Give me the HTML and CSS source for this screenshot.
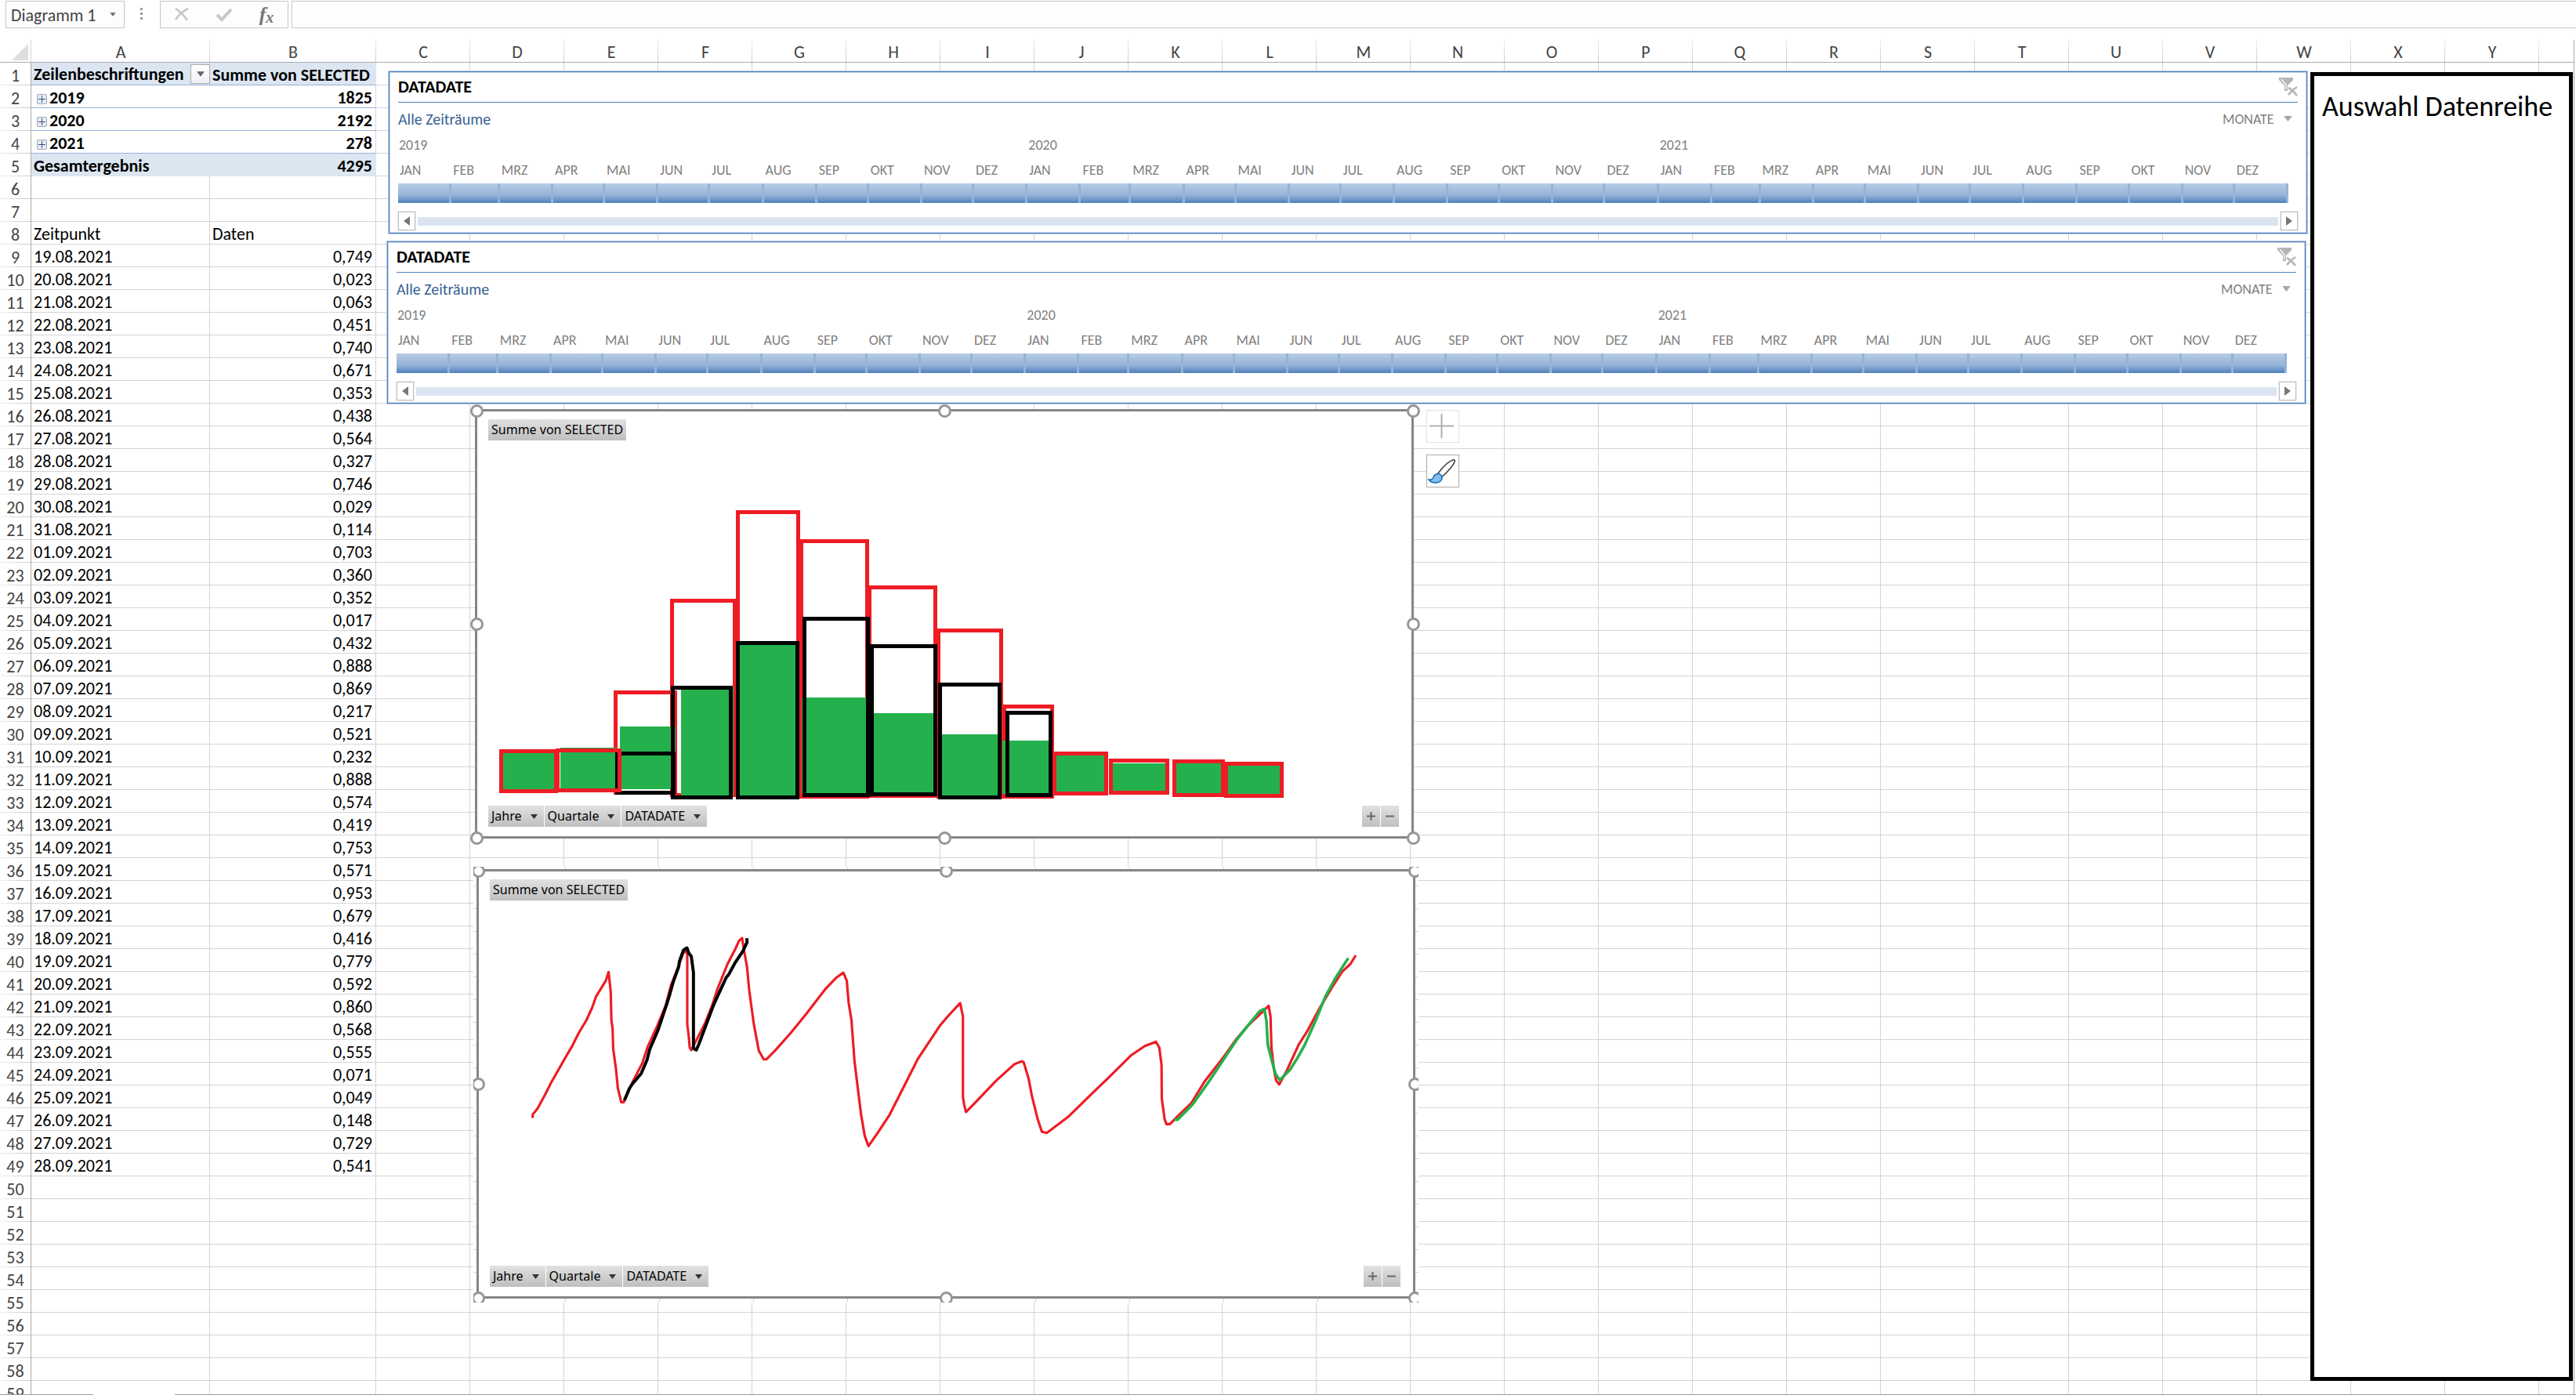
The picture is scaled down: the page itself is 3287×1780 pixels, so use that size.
FILE: index.html
```html
<!DOCTYPE html>
<html lang="de">
<head>
<meta charset="utf-8">
<title>Diagramm 1</title>
<link rel="stylesheet" href="styles.css">
</head>
<body>
<svg class="defs" aria-hidden="true">
  <symbol id="down" viewBox="0 0 12 8"><path d="M0 0h12L6 8z"/></symbol>
  <symbol id="left" viewBox="0 0 8 12"><path d="M8 0v12L0 6z"/></symbol>
  <symbol id="right" viewBox="0 0 8 12"><path d="M0 0v12l8-6z"/></symbol>
  <symbol id="clear-filter" viewBox="0 0 24 24"><path d="M0 0h18v3l-7 7v7H7v-7L0 3z" fill="#b5b5b5"/><path d="M3 2l6 7v6" fill="none" stroke="#fff" stroke-width="1.3"/><path d="M12 13c4 2 7 5 11 10M23 12c-5 3-8 6-11 10" fill="none" stroke="#b5b5b5" stroke-width="2.6"/></symbol>
</svg>

<header class="formula-bar">
  <div class="name-box">
    <input class="name-input" type="text" value="Diagramm 1" aria-label="Namenfeld">
    <button class="name-toggle" type="button" aria-label="Namen anzeigen"><svg width="8" height="5"><use href="#down"/></svg></button>
  </div>
  <span class="grip"></span>
  <div class="tools">
    <button type="button" aria-label="Abbrechen"><svg width="18" height="17" viewBox="0 0 18 17"><path d="M1 1c6 4 11 9 15 15M17 1C11 4 5 9 1 15" fill="none" stroke="#c3c3c3" stroke-width="2.4"/></svg></button>
    <button type="button" aria-label="Eingeben"><svg width="20" height="18" viewBox="0 0 20 18"><path d="M1 9l6 6L19 2" fill="none" stroke="#c8c8c8" stroke-width="4"/></svg></button>
    <button class="fx" type="button" aria-label="Funktion einfügen">f<span>x</span></button>
  </div>
  <input class="formula" type="text" aria-label="Bearbeitungsleiste">
</header>

<main class="sheet">
<table class="grid">
<colgroup><col class="c-num"><col class="c-a"><col class="c-b"><col class="c-std" span="23"><col></colgroup>
<thead>
<tr><th class="corner"><svg width="21" height="21" viewBox="0 0 21 21"><path d="M21 0v21H0z" fill="#dedede"/></svg></th><th>A</th><th>B</th><th>C</th><th>D</th><th>E</th><th>F</th><th>G</th><th>H</th><th>I</th><th>J</th><th>K</th><th>L</th><th>M</th><th>N</th><th>O</th><th>P</th><th>Q</th><th>R</th><th>S</th><th>T</th><th>U</th><th>V</th><th>W</th><th>X</th><th>Y</th><th class="last"></th></tr>
</thead>
<tbody>
<tr class="pivot total"><th>1</th><td class="has-field"><div class="field">Zeilenbeschriftungen<button type="button" aria-label="Filter"><svg width="10" height="7"><use href="#down"/></svg></button></div></td><td class="label">Summe von SELECTED</td><td class="rest" colspan="24"></td></tr>
<tr class="pivot"><th>2</th><td><button class="expand" type="button" aria-label="Erweitern"></button>2019</td><td>1825</td><td class="rest" colspan="24"></td></tr>
<tr class="pivot"><th>3</th><td><button class="expand" type="button" aria-label="Erweitern"></button>2020</td><td>2192</td><td class="rest" colspan="24"></td></tr>
<tr class="pivot"><th>4</th><td><button class="expand" type="button" aria-label="Erweitern"></button>2021</td><td>278</td><td class="rest" colspan="24"></td></tr>
<tr class="pivot total sum"><th>5</th><td>Gesamtergebnis</td><td>4295</td><td class="rest" colspan="24"></td></tr>
<tr><th>6</th><td></td><td></td><td class="rest" colspan="24"></td></tr>
<tr><th>7</th><td></td><td></td><td class="rest" colspan="24"></td></tr>
<tr><th>8</th><td>Zeitpunkt</td><td class="label">Daten</td><td class="rest" colspan="24"></td></tr>
<tr><th>9</th><td>19.08.2021</td><td>0,749</td><td class="rest" colspan="24"></td></tr>
<tr><th>10</th><td>20.08.2021</td><td>0,023</td><td class="rest" colspan="24"></td></tr>
<tr><th>11</th><td>21.08.2021</td><td>0,063</td><td class="rest" colspan="24"></td></tr>
<tr><th>12</th><td>22.08.2021</td><td>0,451</td><td class="rest" colspan="24"></td></tr>
<tr><th>13</th><td>23.08.2021</td><td>0,740</td><td class="rest" colspan="24"></td></tr>
<tr><th>14</th><td>24.08.2021</td><td>0,671</td><td class="rest" colspan="24"></td></tr>
<tr><th>15</th><td>25.08.2021</td><td>0,353</td><td class="rest" colspan="24"></td></tr>
<tr><th>16</th><td>26.08.2021</td><td>0,438</td><td class="rest" colspan="24"></td></tr>
<tr><th>17</th><td>27.08.2021</td><td>0,564</td><td class="rest" colspan="24"></td></tr>
<tr><th>18</th><td>28.08.2021</td><td>0,327</td><td class="rest" colspan="24"></td></tr>
<tr><th>19</th><td>29.08.2021</td><td>0,746</td><td class="rest" colspan="24"></td></tr>
<tr><th>20</th><td>30.08.2021</td><td>0,029</td><td class="rest" colspan="24"></td></tr>
<tr><th>21</th><td>31.08.2021</td><td>0,114</td><td class="rest" colspan="24"></td></tr>
<tr><th>22</th><td>01.09.2021</td><td>0,703</td><td class="rest" colspan="24"></td></tr>
<tr><th>23</th><td>02.09.2021</td><td>0,360</td><td class="rest" colspan="24"></td></tr>
<tr><th>24</th><td>03.09.2021</td><td>0,352</td><td class="rest" colspan="24"></td></tr>
<tr><th>25</th><td>04.09.2021</td><td>0,017</td><td class="rest" colspan="24"></td></tr>
<tr><th>26</th><td>05.09.2021</td><td>0,432</td><td class="rest" colspan="24"></td></tr>
<tr><th>27</th><td>06.09.2021</td><td>0,888</td><td class="rest" colspan="24"></td></tr>
<tr><th>28</th><td>07.09.2021</td><td>0,869</td><td class="rest" colspan="24"></td></tr>
<tr><th>29</th><td>08.09.2021</td><td>0,217</td><td class="rest" colspan="24"></td></tr>
<tr><th>30</th><td>09.09.2021</td><td>0,521</td><td class="rest" colspan="24"></td></tr>
<tr><th>31</th><td>10.09.2021</td><td>0,232</td><td class="rest" colspan="24"></td></tr>
<tr><th>32</th><td>11.09.2021</td><td>0,888</td><td class="rest" colspan="24"></td></tr>
<tr><th>33</th><td>12.09.2021</td><td>0,574</td><td class="rest" colspan="24"></td></tr>
<tr><th>34</th><td>13.09.2021</td><td>0,419</td><td class="rest" colspan="24"></td></tr>
<tr><th>35</th><td>14.09.2021</td><td>0,753</td><td class="rest" colspan="24"></td></tr>
<tr><th>36</th><td>15.09.2021</td><td>0,571</td><td class="rest" colspan="24"></td></tr>
<tr><th>37</th><td>16.09.2021</td><td>0,953</td><td class="rest" colspan="24"></td></tr>
<tr><th>38</th><td>17.09.2021</td><td>0,679</td><td class="rest" colspan="24"></td></tr>
<tr><th>39</th><td>18.09.2021</td><td>0,416</td><td class="rest" colspan="24"></td></tr>
<tr><th>40</th><td>19.09.2021</td><td>0,779</td><td class="rest" colspan="24"></td></tr>
<tr><th>41</th><td>20.09.2021</td><td>0,592</td><td class="rest" colspan="24"></td></tr>
<tr><th>42</th><td>21.09.2021</td><td>0,860</td><td class="rest" colspan="24"></td></tr>
<tr><th>43</th><td>22.09.2021</td><td>0,568</td><td class="rest" colspan="24"></td></tr>
<tr><th>44</th><td>23.09.2021</td><td>0,555</td><td class="rest" colspan="24"></td></tr>
<tr><th>45</th><td>24.09.2021</td><td>0,071</td><td class="rest" colspan="24"></td></tr>
<tr><th>46</th><td>25.09.2021</td><td>0,049</td><td class="rest" colspan="24"></td></tr>
<tr><th>47</th><td>26.09.2021</td><td>0,148</td><td class="rest" colspan="24"></td></tr>
<tr><th>48</th><td>27.09.2021</td><td>0,729</td><td class="rest" colspan="24"></td></tr>
<tr><th>49</th><td>28.09.2021</td><td>0,541</td><td class="rest" colspan="24"></td></tr>
<tr><th>50</th><td></td><td></td><td class="rest" colspan="24"></td></tr>
<tr><th>51</th><td></td><td></td><td class="rest" colspan="24"></td></tr>
<tr><th>52</th><td></td><td></td><td class="rest" colspan="24"></td></tr>
<tr><th>53</th><td></td><td></td><td class="rest" colspan="24"></td></tr>
<tr><th>54</th><td></td><td></td><td class="rest" colspan="24"></td></tr>
<tr><th>55</th><td></td><td></td><td class="rest" colspan="24"></td></tr>
<tr><th>56</th><td></td><td></td><td class="rest" colspan="24"></td></tr>
<tr><th>57</th><td></td><td></td><td class="rest" colspan="24"></td></tr>
<tr><th>58</th><td></td><td></td><td class="rest" colspan="24"></td></tr>
<tr><th>59</th><td></td><td></td><td class="rest" colspan="24"></td></tr>
</tbody>
</table>

<section class="slicer slicer-1">
  <div class="slicer-head"><h2>DATADATE</h2><button type="button" aria-label="Filter löschen"><svg width="24" height="24"><use href="#clear-filter"/></svg></button></div>
  <div class="slicer-period"><span>Alle Zeiträume</span><label class="level"><select aria-label="Zeitebene"><option>MONATE</option></select><svg width="11" height="7"><use href="#down"/></svg></label></div>
  <div class="years">
    <div class="year"><h3>2019</h3><ol><li class="d31">JAN</li><li class="d28">FEB</li><li class="d31">MRZ</li><li class="d30">APR</li><li class="d31">MAI</li><li class="d30">JUN</li><li class="d31">JUL</li><li class="d31">AUG</li><li class="d30">SEP</li><li class="d31">OKT</li><li class="d30">NOV</li><li class="d31">DEZ</li></ol></div>
    <div class="year leap"><h3>2020</h3><ol><li class="d31">JAN</li><li class="d29">FEB</li><li class="d31">MRZ</li><li class="d30">APR</li><li class="d31">MAI</li><li class="d30">JUN</li><li class="d31">JUL</li><li class="d31">AUG</li><li class="d30">SEP</li><li class="d31">OKT</li><li class="d30">NOV</li><li class="d31">DEZ</li></ol></div>
    <div class="year"><h3>2021</h3><ol><li class="d31">JAN</li><li class="d28">FEB</li><li class="d31">MRZ</li><li class="d30">APR</li><li class="d31">MAI</li><li class="d30">JUN</li><li class="d31">JUL</li><li class="d31">AUG</li><li class="d30">SEP</li><li class="d31">OKT</li><li class="d30">NOV</li><li class="d31">DEZ</li></ol></div>
  </div>
  <div class="scroll"><button type="button" aria-label="Zurück"><svg width="8" height="12"><use href="#left"/></svg></button><span class="track"></span><button type="button" aria-label="Weiter"><svg width="8" height="12"><use href="#right"/></svg></button></div>
</section>

<section class="slicer slicer-2">
  <div class="slicer-head"><h2>DATADATE</h2><button type="button" aria-label="Filter löschen"><svg width="24" height="24"><use href="#clear-filter"/></svg></button></div>
  <div class="slicer-period"><span>Alle Zeiträume</span><label class="level"><select aria-label="Zeitebene"><option>MONATE</option></select><svg width="11" height="7"><use href="#down"/></svg></label></div>
  <div class="years">
    <div class="year"><h3>2019</h3><ol><li class="d31">JAN</li><li class="d28">FEB</li><li class="d31">MRZ</li><li class="d30">APR</li><li class="d31">MAI</li><li class="d30">JUN</li><li class="d31">JUL</li><li class="d31">AUG</li><li class="d30">SEP</li><li class="d31">OKT</li><li class="d30">NOV</li><li class="d31">DEZ</li></ol></div>
    <div class="year leap"><h3>2020</h3><ol><li class="d31">JAN</li><li class="d29">FEB</li><li class="d31">MRZ</li><li class="d30">APR</li><li class="d31">MAI</li><li class="d30">JUN</li><li class="d31">JUL</li><li class="d31">AUG</li><li class="d30">SEP</li><li class="d31">OKT</li><li class="d30">NOV</li><li class="d31">DEZ</li></ol></div>
    <div class="year"><h3>2021</h3><ol><li class="d31">JAN</li><li class="d28">FEB</li><li class="d31">MRZ</li><li class="d30">APR</li><li class="d31">MAI</li><li class="d30">JUN</li><li class="d31">JUL</li><li class="d31">AUG</li><li class="d30">SEP</li><li class="d31">OKT</li><li class="d30">NOV</li><li class="d31">DEZ</li></ol></div>
  </div>
  <div class="scroll"><button type="button" aria-label="Zurück"><svg width="8" height="12"><use href="#left"/></svg></button><span class="track"></span><button type="button" aria-label="Weiter"><svg width="8" height="12"><use href="#right"/></svg></button></div>
</section>

<div class="holder holder-1">
<section class="chart">
  <div class="chart-row"><button class="chip value" type="button">Summe von SELECTED</button></div>
  <svg class="plot" viewBox="623 562 1162 466" role="img" aria-label="Histogramm">
    <g fill="none" stroke="#ee1c24" stroke-width="5">
      <path d="M785.5 883.5h76v128h-76zM857.5 766.5h80v248h-80zM941.5 653.5h77v361h-77zM1022.5 690.5h84v326h-84zM1109.5 749.5h84v266h-84zM1197.5 804.5h80v212h-80zM1281.5 901.5h61v115h-61z"/>
    </g>
    <path fill="#24b14d" d="M641 961h66v46h-66zM715 954h72v52h-72zM791 927h71v80h-71zM869 876h67v139h-67zM944 823h71v192h-71zM1023 890h82v123h-82zM1112 910h79v101h-79zM1202 937h71v78h-71zM1279 945h60v68h-60zM1348 963h61v47h-61zM1420 974h67v35h-67zM1501 974h57v38h-57zM1567 977h66v36h-66z"/>
    <path fill="none" stroke="#000" stroke-width="5" d="M787.5 961.5h72v50h-72zM858.5 877.5h74v140h-74zM941.5 820.5h76v197h-76zM1026.5 789.5h81v225h-81zM1112.5 824.5h81v189h-81zM1199.5 873.5h76v144h-76zM1285.5 909.5h55v105h-55z"/>
    <path fill="none" stroke="#ee1c24" stroke-width="5" d="M639.5 958.5h70v51h-70zM711.5 957.5h79v51h-79zM1345.5 961.5h66v51h-66zM1417.5 970.5h72v41h-72zM1498.5 971.5h62v43h-62zM1564.5 974.5h71v41h-71z"/>
  </svg>
  <div class="chart-row"><div class="chips"><button class="chip" type="button">Jahre<svg width="9" height="6"><use href="#down"/></svg></button><button class="chip" type="button">Quartale<svg width="9" height="6"><use href="#down"/></svg></button><button class="chip" type="button">DATADATE<svg width="9" height="6"><use href="#down"/></svg></button></div><div class="chips"><button class="chip zoom" type="button" aria-label="Feld erweitern"><svg width="11" height="11" viewBox="0 0 11 11"><path d="M0 5.5h11M5.5 0v11" stroke="#6a6a6a" stroke-width="2"/></svg></button><button class="chip zoom" type="button" aria-label="Feld reduzieren"><svg width="11" height="11" viewBox="0 0 11 11"><path d="M0 5.5h11" stroke="#6a6a6a" stroke-width="2"/></svg></button></div></div>
  <i class="knob t l"></i><i class="knob t c"></i><i class="knob t r"></i><i class="knob m l"></i><i class="knob m r"></i><i class="knob b l"></i><i class="knob b c"></i><i class="knob b r"></i>
</section>
</div>

<div class="holder holder-2">
<section class="chart">
  <div class="chart-row"><button class="chip value" type="button">Summe von SELECTED</button></div>
  <svg class="plot" viewBox="88 225 2939 1179" role="img" aria-label="Liniendiagramm">
    <g fill="none" stroke-linejoin="round">
    <polyline stroke="#ee1c24" stroke-width="8" points="226,927 226,916 242,896 266,852 284,816 330,735 354,694 374,654 399,612 418,571 430,536 462,484 471,456 478,520 480,610 484,640 486,705 495,770 501,832 512,876 520,876 548,812 580,750 597,698 628,630 655,565 672,500 690,455 712,395 720,385 725,400 725,625 730,665 733,700 738,708 755,675 782,622 805,565 822,512 855,430 880,382 892,355 902,346 908,385 918,440 925,515 940,625 956,710 972,738 980,738 1010,708 1058,654 1110,590 1170,512 1205,475 1229,458 1240,484 1246,555 1255,610 1265,745 1286,915 1298,985 1310,1018 1340,975 1378,917 1440,795 1469,737 1540,630 1568,597 1606,556 1615,600 1615,860 1619,885 1625,908 1656,876 1721,808 1782,753 1805,744 1811,747 1827,800 1838,858 1856,930 1870,972 1886,975 1954,924 2040,840 2085,797 2159,724 2202,695 2238,681 2249,700 2256,755 2257,865 2266,930 2272,947 2283,947 2310,920 2353,878 2396,808 2453,735 2498,672 2534,630 2576,590 2602,565 2608,600 2611,700 2619,770 2626,806 2636,819 2660,775 2699,690 2726,648 2768,570 2807,505 2839,455 2866,430 2883,402"/>
    <polyline stroke="#000" stroke-width="10" points="522,870 538,832 548,817 576,784 595,740 604,705 630,645 658,562 668,530 680,487 697,440 700,420 713,385 724,378 730,395 738,405 745,458 745,702 754,708 762,690 780,642 810,562 850,475 860,462 880,425 905,388 918,360 917,347"/>
    <polyline stroke="#24b14d" stroke-width="9" points="2297,933 2308,933 2356,884 2410,808 2450,748 2498,676 2534,630 2572,583 2588,575 2595,615 2599,690 2613,745 2624,785 2638,805 2672,770 2694,735 2719,690 2757,605 2785,535 2816,478 2835,448 2859,411"/>
    </g>
  </svg>
  <div class="chart-row"><div class="chips"><button class="chip" type="button">Jahre<svg width="9" height="6"><use href="#down"/></svg></button><button class="chip" type="button">Quartale<svg width="9" height="6"><use href="#down"/></svg></button><button class="chip" type="button">DATADATE<svg width="9" height="6"><use href="#down"/></svg></button></div><div class="chips"><button class="chip zoom" type="button" aria-label="Feld erweitern"><svg width="11" height="11" viewBox="0 0 11 11"><path d="M0 5.5h11M5.5 0v11" stroke="#6a6a6a" stroke-width="2"/></svg></button><button class="chip zoom" type="button" aria-label="Feld reduzieren"><svg width="11" height="11" viewBox="0 0 11 11"><path d="M0 5.5h11" stroke="#6a6a6a" stroke-width="2"/></svg></button></div></div>
  <i class="knob t l"></i><i class="knob t c"></i><i class="knob t r"></i><i class="knob m l"></i><i class="knob m r"></i><i class="knob b l"></i><i class="knob b c"></i><i class="knob b r"></i>
</section>
</div>

<div class="chart-tools">
  <button class="faded" type="button" aria-label="Diagrammelemente"><svg width="40" height="40" viewBox="0 0 40 40"><path d="M3 19.5h31M18.500 4v31" stroke="#b0b0b0" stroke-width="2"/></svg></button>
  <button type="button" aria-label="Diagrammformatvorlagen"><svg width="40" height="40" viewBox="0 0 40 40"><path d="M14 23C20 15 28 7 34 5.500c1.500.5 1.500 1.500 1 3C33 14 26 21 18.500 28z" fill="#fff" stroke="#444" stroke-width="1.700"/><path d="M2 31c4 .5 5-1 6.500-4 2-4 7-4.500 9.500-1.500 2.500 3.500 0 8-4 9-4 1-9 .5-12-3.500z" fill="#83beec" stroke="#1a73bd" stroke-width="1.600"/></svg></button>
</div>

<aside class="series-panel"><h1>Auswahl Datenreihe</h1></aside>
</main>
<footer class="tabs"><span class="tab-edge"></span><span class="tab-fill"></span></footer>
</body>
</html>
```
FILE: styles.css
```css
* { box-sizing: border-box; }

body {
  margin: 0;
  height: 100vh;
  display: flex;
  flex-direction: column;
  overflow: hidden;
  background: #fff;
  color: #000;
  font: 22px/28px Carlito, Calibri, Lato, sans-serif;
}

button, input, select {
  margin: 0;
  padding: 0;
  border: 0;
  border-radius: 0;
  background: none;
  color: inherit;
  font: inherit;
}

h1, h2, h3, ol { margin: 0; padding: 0; list-style: none; }
svg { display: block; }
.defs { display: none; }

/* Formula bar */
.formula-bar {
  display: flex;
  flex: none;
  height: 51px;
  padding: 1px 0 15px 7px;
}
.name-box, .tools, .formula { border: 1px solid #c6c6c6; background: #fdfdfd; color: #444; }
.name-box { display: flex; width: 152px; }
.name-input { width: 126px; padding: 2px 0 0 6px; }
.name-toggle { display: flex; flex: 1; align-items: center; justify-content: center; padding-right: 4px; fill: #777; }
.grip {
  width: 3px;
  height: 16px;
  margin: 9px 22px 0 20px;
  background: repeating-linear-gradient(#9b9b9b 0 3px, transparent 3px 6px);
}
.tools { display: flex; width: 164px; }
.tools button { display: flex; flex: 1; align-items: center; justify-content: center; }
.tools .fx { font: italic bold 26px/26px "Liberation Serif", serif; color: #777; }
.fx span { font-size: 20px; padding-top: 6px; }
.formula { flex: 1; margin-left: 4px; border-right: 0; padding: 0 8px; }

/* Cell grid */
.sheet {
  position: relative;
  flex: 1;
  min-height: 0;
  margin-right: 2px;
  overflow: hidden;
  border-right: 1px solid #ababab;
}
.grid { width: 100%; table-layout: fixed; border-collapse: separate; border-spacing: 0; }
.c-num { width: 40px; }
.c-a { width: 228px; }
.c-b { width: 212px; }
.c-std { width: 120px; }
.grid th, .grid td {
  height: 29px;
  padding: 3px 4px 0 3px;
  line-height: 25px;
  overflow: hidden;
  white-space: nowrap;
}
.grid th { font-weight: normal; color: #444; text-align: center; padding: 3px 0 0; }
thead th {
  border-bottom: 1px solid #ababab;
  background: linear-gradient(#f0f0f0, #c8c8c8) right / 1px 100% no-repeat;
}
.grid .corner { background: none; border-right: 1px solid #d4d4d4; }
.corner svg { margin-left: 15px; }
thead .last { background: none; }
tbody th {
  border-right: 1px solid #ababab;
  background: linear-gradient(90deg, #f0f0f0, #c8c8c8) bottom / 100% 1px no-repeat;
}
td { border-right: 1px solid #d4d4d4; border-bottom: 1px solid #d4d4d4; }
td:nth-child(3) { text-align: right; }
td.label { text-align: left; }
td.rest {
  border-right: 0;
  background: repeating-linear-gradient(90deg, transparent 0 119px, #d4d4d4 119px 120px);
}
.pivot td:not(.rest) { font-weight: bold; border-bottom-color: #95b3d7; }
.pivot td:nth-child(2) { border-right: 0; }
.total td:not(.rest) { background: #dce6f1; border-right-color: #dce6f1; }
.sum td:not(.rest) { border-bottom-color: #dce6f1; }
.grid .has-field { padding: 0 0 0 3px; }
.field { display: flex; justify-content: space-between; align-items: center; height: 28px; line-height: 31px; }
.field button {
  display: flex;
  width: 25px;
  height: 25px;
  align-items: center;
  justify-content: center;
  border: 1px solid #ababab;
  background: linear-gradient(#fff, #eef0f4);
  fill: #666;
}
.expand {
  width: 13px;
  height: 13px;
  margin: 0 3px 0 4px;
  border: 1px solid #9ba7b7;
  border-radius: 2px;
  background:
    linear-gradient(#3b4f81, #3b4f81) center / 9px 1px no-repeat,
    linear-gradient(#3b4f81, #3b4f81) center / 1px 9px no-repeat,
    #e6ebf3;
}

/* Timeline slicers */
.slicer {
  position: absolute;
  width: 2448px;
  height: 207px;
  padding: 0 11px;
  border: 1px solid #4f81bd;
  background: #fff;
  box-shadow: 0 0 0 1px #b8cce4, inset 0 0 0 1px #c9d8eb;
  color: #7f7f7f;
  font-size: 17px;
}
.slicer-1 { left: 496px; top: 40px; }
.slicer-2 { left: 494px; top: 257px; }
.slicer-head { display: flex; justify-content: space-between; align-items: center; height: 39px; border-bottom: 1px solid #4f81bd; }
.slicer h2 { font-size: 22px; line-height: 38px; color: #000; }
.slicer-period { display: flex; justify-content: space-between; align-items: center; height: 41px; color: #376092; font-size: 20px; }
.level { display: flex; align-items: center; width: 96px; padding-right: 7px; color: #7f7f7f; fill: #a6a6a6; font-size: 18px; }
.level select { appearance: none; flex: 1; width: 72px; }
.years { display: flex; margin-right: 12px; }
.year { flex: 365 1 0; min-width: 0; }
.leap { flex-grow: 366; }
.slicer h3 { padding-left: 1px; font-weight: normal; font-size: 18px; line-height: 26px; }
.year ol { display: flex; }
.year li { min-width: 0; padding-top: 2px; line-height: 34px; text-indent: 2px; font-size: 18px; }
.year li::after {
  content: "";
  display: block;
  height: 25px;
  border-right: 3px solid #95b3d7;
  background: linear-gradient(#b8cce4, #95b3d7 60%, #4f81bd);
}
.d28 { flex: 28 1 0; }
.d29 { flex: 29 1 0; }
.d30 { flex: 30 1 0; }
.d31 { flex: 31 1 0; }
.scroll { display: flex; align-items: center; gap: 3px; margin-top: 11px; }
.scroll button {
  display: flex;
  width: 22px;
  height: 24px;
  align-items: center;
  justify-content: center;
  border: 1px solid #bfbfbf;
  box-shadow: 0 0 0 1px #ececec;
  fill: #777;
}
.track { flex: 1; height: 11px; background: #dbe5f1; }

/* Floating charts */
.holder { position: absolute; width: 1206px; height: 556px; }
.holder-1 { left: 602px; top: 468px; }
.holder-2 {
  left: 604px;
  top: 1055px;
  overflow: hidden;
  background:
    repeating-linear-gradient(90deg, transparent 0 119px, #d4d4d4 119px 120px) -2px 0,
    repeating-linear-gradient(transparent 0 28px, #d4d4d4 28px 29px) 0 -4px,
    #fff;
}
.chart {
  position: relative;
  display: flex;
  flex-direction: column;
  height: 548px;
  margin: 3px 4px 5px;
  padding: 10px 16px 12px 14px;
  border: 3px solid #868686;
  background: #fff;
  font: 16px/27px "Noto Sans", sans-serif;
}
.holder-1 .chart, .holder-2 .chart { top: 0; }
.chart-row, .chips { display: flex; justify-content: space-between; gap: 1px; }
.chip {
  display: flex;
  align-items: center;
  gap: 11px;
  height: 27px;
  padding: 0 8px 0 4px;
  background: linear-gradient(#e1e1e1, #bfbfbf);
  fill: #333;
}
.value { padding-right: 4px; }
.zoom { width: 23px; justify-content: center; padding: 0; }
.plot { flex: 1; min-height: 0; width: 100%; }
.knob {
  position: absolute;
  width: 17px;
  height: 17px;
  border: 3px solid #979797;
  border-radius: 50%;
  background: #fff;
}
.t { top: -9px; }
.m { top: 263px; }
.b { bottom: -11px; }
.l { left: -9px; }
.c { left: 588px; }
.r { right: -11px; }

.chart-tools { position: absolute; left: 1820px; top: 472px; display: grid; gap: 15px; }
.chart-tools button { width: 42px; height: 42px; border: 1px solid #ababab; background: #fff; }
.chart-tools .faded { border-color: #e1e1e1; }

.series-panel {
  position: absolute;
  left: 2948px;
  right: 1px;
  top: 41px;
  height: 1670px;
  padding: 16px 10px;
  border: 5px solid #000;
  background: #fff;
}
.series-panel h1 { font-size: 36px; line-height: 46px; font-weight: normal; white-space: nowrap; }

/* Sheet tab strip edge */
.tabs { display: flex; flex: none; gap: 104px; height: 1px; }
.tab-edge { width: 119px; background: #9b9b9b; }
.tab-fill { flex: 1; background: #9b9b9b; }
```
